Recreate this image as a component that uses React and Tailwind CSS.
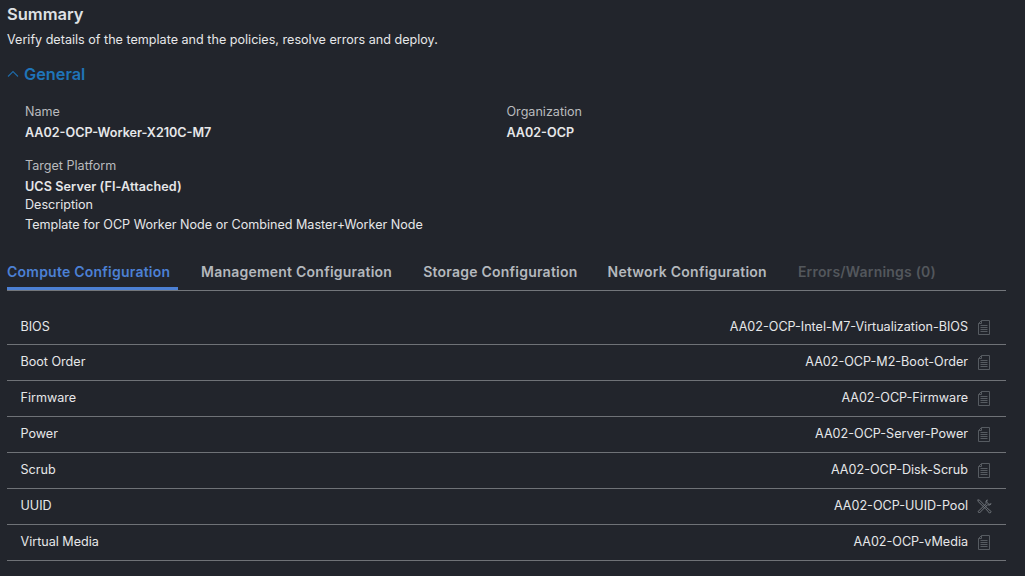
const policies = [
  ["BIOS", "AA02-OCP-Intel-M7-Virtualization-BIOS", "doc"],
  ["Boot Order", "AA02-OCP-M2-Boot-Order", "doc"],
  ["Firmware", "AA02-OCP-Firmware", "doc"],
  ["Power", "AA02-OCP-Server-Power", "doc"],
  ["Scrub", "AA02-OCP-Disk-Scrub", "doc"],
  ["UUID", "AA02-OCP-UUID-Pool", "tools"],
  ["Virtual Media", "AA02-OCP-vMedia", "doc"],
];

function DocIcon() {
  return (
    <svg width="12" height="15" viewBox="0 0 12 15" fill="none" stroke="#565b61" strokeWidth="1">
      <path d="M3.5 0.5H11.5V14.5H0.5V3.5Z" />
      <path d="M3.5 0.5V3.5H0.5" />
      <path d="M2.5 5.5H9.5M2.5 7.5H9.5M2.5 9.5H9.5M2.5 11.5H9.5" />
    </svg>
  );
}

function ToolsIcon() {
  return (
    <svg width="15" height="15" viewBox="0 0 15 15" fill="none" stroke="#6f747a" strokeWidth="1" className="-ml-[1px]">
      <path d="M0.8 0.8L2.6 1.2L9.2 8" />
      <path d="M0.8 0.8L1.2 2.6L8 9.2" />
      <path d="M8.4 9.4L9.4 8.4L14.2 12.6L12.6 14.2Z" />
      <path d="M10.2 0.8A3.2 3.2 0 0 0 9.2 4.6L1 12.6L2.4 14L10.4 5.8A3.2 3.2 0 0 0 14.2 4.8L12 5.4L9.6 3Z" />
    </svg>
  );
}

function Tab({ children, className }) {
  return <div className={`h-[31px] pt-[3px] ${className}`}>{children}</div>;
}

export default function App() {
  return (
    <div className="w-[1025px] h-[576px] overflow-hidden bg-[#22252c] font-['Inter','Liberation_Sans',sans-serif] text-[#e6e7e9]">
      <div className="pl-[7px] pt-[4px]">
        <h1 className="text-[16.5px] leading-[20px] font-semibold text-[#dfe1e4]">Summary</h1>
        <p className="mt-[6px] text-[12.6px] leading-[20px] text-[#e6e7e9]">Verify details of the template and the policies, resolve errors and deploy.</p>
        <div className="mt-[14px] flex items-center h-[20px] text-[#1f74b8]">
          <svg width="12" height="8" viewBox="0 0 12 8" fill="none" stroke="#1f6aa8" strokeWidth="1.1"><path d="M1 6.5L6 1.5L11 6.5" /></svg>
          <span className="ml-[5px] text-[16.3px] font-semibold">General</span>
        </div>
        <div className="ml-[18px] mt-[18px] text-[12.58px]">
          <div className="flex">
            <div className="w-[481.5px]">
              <div className="leading-[20px] text-[#b9bbbe]">Name</div>
              <div className="mt-[1px] leading-[20px] font-semibold">AA02-OCP-Worker-X210C-M7</div>
            </div>
            <div>
              <div className="leading-[20px] text-[#b9bbbe]">Organization</div>
              <div className="mt-[1px] leading-[20px] font-semibold">AA02-OCP</div>
            </div>
          </div>
          <div className="mt-[13px] leading-[20px] text-[#b9bbbe]">Target Platform</div>
          <div className="mt-[1px] leading-[20px] font-semibold tracking-[0.1px]">UCS Server (FI-Attached)</div>
          <div className="leading-[18px] mt-[-1px]">Description</div>
          <div className="leading-[20px] mt-[0.5px]">Template for OCP Worker Node or Combined Master+Worker Node</div>
        </div>
      </div>
      <div className="ml-[7px] mr-[19px] mt-[24px]">
        <div className="flex h-[32px] border-b border-[#73767b] text-[14px] font-semibold leading-[20px] tracking-[0.23px]">
          <Tab className="w-[171px] mr-[23px] border-b-[3px] border-[#4c80d4] text-[#4c80d4]">Compute Configuration</Tab>
          <Tab className="mr-[31px] text-[#b4b8bd]">Management Configuration</Tab>
          <Tab className="mr-[30px] text-[#b4b8bd]">Storage Configuration</Tab>
          <Tab className="mr-[31px] text-[#b4b8bd]">Network Configuration</Tab>
          <Tab className="text-[#53575c] tracking-[0.2px]">Errors/Warnings (0)</Tab>
        </div>
        <div className="mt-[18px] text-[12.58px]">
          {policies.map(([label, value, icon], i) => (
            <div key={label} className={`flex items-center h-[36px] border-b border-[#6f7277] pl-[13.5px] ${i === 0 ? "pt-[2px]" : ""}`}>
              <span>{label}</span>
              <span className="ml-auto">{value}</span>
              <span className="w-[38px] flex justify-start pl-[10px]">{icon === "doc" ? <DocIcon /> : <ToolsIcon />}</span>
            </div>
          ))}
        </div>
      </div>
    </div>
  );
}
